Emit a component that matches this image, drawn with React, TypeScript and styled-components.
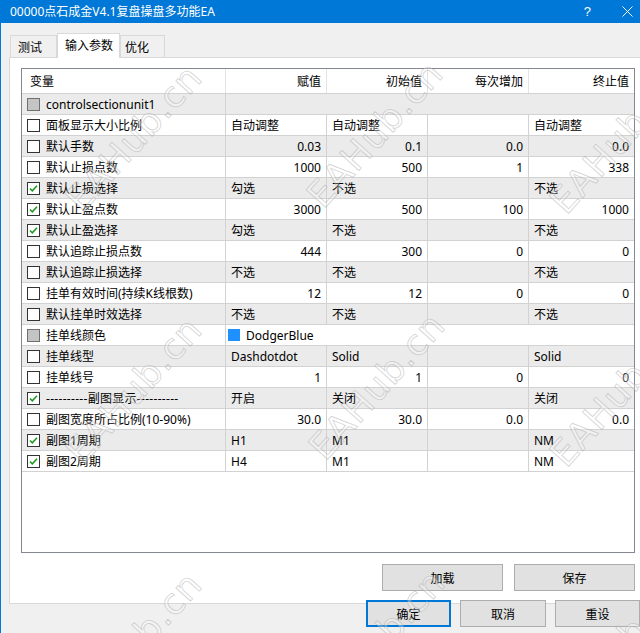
import React from "react";
import styled, { createGlobalStyle, css } from "styled-components";

const GlobalStyle = createGlobalStyle`
  html, body { margin: 0; padding: 0; overflow: hidden; background: #f0f0f0; }
  body {
    font-family: "Noto Sans", "Noto Sans CJK SC", sans-serif;
    font-size: 12px;
    color: #000;
  }
  * { box-sizing: border-box; }
`;

const Window = styled.div`
  position: relative;
  width: 640px;
  height: 633px;
  overflow: hidden;
  display: flex;
  flex-direction: column;
  background: #f0f0f0;
  border-left: 1px solid #0078d7;
`;

const TitleBar = styled.div`
  height: 23px;
  flex: none;
  display: flex;
  align-items: center;
  background: #0078d7;
  color: #fff;
  padding: 0 7px 1px 9px;
  font-size: 12px;
`;

const Title = styled.span`
  flex: 1;
  white-space: nowrap;
`;

const TitleControls = styled.div`
  display: flex;
  align-items: center;
  gap: 31px;
`;

const Help = styled.span`
  font-family: "Liberation Sans", sans-serif;
  font-size: 13px;
  line-height: 1;
`;

const Body = styled.div`
  flex: 1;
  display: flex;
  flex-direction: column;
  padding-left: 8px;
`;

const TabStrip = styled.div`
  margin-top: 10px;
  height: 24px;
  display: flex;
  align-items: flex-end;
  padding-left: 1px;
  position: relative;
  z-index: 1;
`;

const Tab = styled.div<{ $active?: boolean; $w: number; $pl: number }>`
  width: ${(p) => p.$w}px;
  padding-left: ${(p) => p.$pl}px;
  display: flex;
  align-items: center;
  border: 1px solid #d9d9d9;
  border-bottom: none;
  white-space: nowrap;
  ${(p) =>
    p.$active
      ? css`
          height: 25px;
          margin-bottom: -1px;
          background: #fff;
          padding-bottom: 2px;
        `
      : css`
          height: 22px;
          background: #f0f0f0;
        `}
`;

const Panel = styled.div`
  height: 547px;
  background: #fff;
  border: 1px solid #d9d9d9;
  border-right: none;
  padding: 10px 5px 11px 11px;
  display: flex;
  flex-direction: column;
`;

const Table = styled.div`
  width: 614px;
  height: 485px;
  flex: none;
  border: 1px solid #828790;
  background: #fff;
  display: flex;
  flex-direction: column;
`;

const Row = styled.div<{ $grey?: boolean; $header?: boolean }>`
  display: grid;
  grid-template-columns: 204px 101px 101px 101px 1fr;
  height: ${(p) => (p.$header ? 25 : 21)}px;
  flex: none;
  background: ${(p) => (p.$grey ? "#ebebeb" : "#fff")};
  border-bottom: 1px solid #d2d2d2;
`;

const Cell = styled.div<{ $num?: boolean; $span?: number; $last?: boolean; $header?: boolean }>`
  display: flex;
  align-items: center;
  gap: 6px;
  white-space: nowrap;
  overflow: hidden;
  justify-content: ${(p) => (p.$num ? "flex-end" : "flex-start")};
  padding: ${(p) => (p.$num ? "0 5px 0 0" : "0 0 0 5px")};
  border-right: ${(p) => (p.$last ? "none" : `1px solid ${p.$header ? "#e3e3e3" : "#d2d2d2"}`)};
  ${(p) => (p.$span ? `grid-column: span ${p.$span};` : "")}
`;

const NameCell = styled(Cell)`
  padding-left: 5px;
`;

const HeaderName = styled(Cell)`
  padding-left: 8px;
`;

const Dashes = styled.span`
  letter-spacing: 0.3px;
`;

const Box = styled.span<{ $disabled?: boolean }>`
  width: 13px;
  height: 13px;
  flex: none;
  border: 1px solid ${(p) => (p.$disabled ? "#707070" : "#333")};
  background: ${(p) => (p.$disabled ? "#c4c4c4" : "#fff")};
  display: flex;
  align-items: center;
  justify-content: center;
`;

const Swatch = styled.span<{ $color: string }>`
  width: 12px;
  height: 12px;
  flex: none;
  margin-left: -3px;
  background: ${(p) => p.$color};
`;

const ButtonRow = styled.div<{ $gap: number }>`
  display: flex;
  justify-content: flex-end;
  gap: ${(p) => p.$gap}px;
`;

const TopButtons = styled(ButtonRow)`
  margin-top: 11px;
`;

const BottomButtons = styled(ButtonRow)`
  margin-top: -4px;
  position: relative;
  z-index: 1;
`;

const Button = styled.div<{ $w: number; $default?: boolean }>`
  width: ${(p) => p.$w}px;
  height: 27px;
  display: flex;
  align-items: center;
  justify-content: center;
  background: #e1e1e1;
  border: ${(p) => (p.$default ? "2px solid #0078d7" : "1px solid #adadad")};
`;

const Watermark = styled.span<{ $x: number; $y: number }>`
  position: absolute;
  left: ${(p) => p.$x}px;
  top: ${(p) => p.$y}px;
  transform: translate(-50%, -50%) rotate(-48deg);
  font-family: "DejaVu Sans", sans-serif;
  font-size: 36px;
  letter-spacing: 1px;
  color: rgba(255, 255, 255, 0.3);
  -webkit-text-stroke: 0.8px rgba(165, 165, 165, 0.5);
  white-space: nowrap;
  pointer-events: none;
  z-index: 5;
`;

type Check = "on" | "off" | "disabled";
type RowData = {
  name: string;
  check: Check;
  values?: string[];
  num?: boolean;
  color?: string;
  merged?: boolean;
};

const rows: RowData[] = [
  { name: "controlsectionunit1", check: "disabled", merged: true },
  { name: "面板显示大小比例", check: "off", values: ["自动调整", "自动调整", "", "自动调整"] },
  { name: "默认手数", check: "off", values: ["0.03", "0.1", "0.0", "0.0"], num: true },
  { name: "默认止损点数", check: "off", values: ["1000", "500", "1", "338"], num: true },
  { name: "默认止损选择", check: "on", values: ["勾选", "不选", "", "不选"] },
  { name: "默认止盈点数", check: "on", values: ["3000", "500", "100", "1000"], num: true },
  { name: "默认止盈选择", check: "on", values: ["勾选", "不选", "", "不选"] },
  { name: "默认追踪止损点数", check: "off", values: ["444", "300", "0", "0"], num: true },
  { name: "默认追踪止损选择", check: "off", values: ["不选", "不选", "", "不选"] },
  { name: "挂单有效时间(持续K线根数)", check: "off", values: ["12", "12", "0", "0"], num: true },
  { name: "默认挂单时效选择", check: "off", values: ["不选", "不选", "", "不选"] },
  { name: "挂单线颜色", check: "disabled", merged: true, color: "DodgerBlue" },
  { name: "挂单线型", check: "off", values: ["Dashdotdot", "Solid", "", "Solid"] },
  { name: "挂单线号", check: "off", values: ["1", "1", "0", "0"], num: true },
  { name: "----------副图显示----------", check: "on", values: ["开启", "关闭", "", "关闭"] },
  { name: "副图宽度所占比例(10-90%)", check: "off", values: ["30.0", "30.0", "0.0", "0.0"], num: true },
  { name: "副图1周期", check: "on", values: ["H1", "M1", "", "NM"] },
  { name: "副图2周期", check: "on", values: ["H4", "M1", "", "NM"] },
];

const CheckBox = ({ state }: { state: Check }) => (
  <Box $disabled={state === "disabled"}>
    {state === "on" && (
      <svg width="11" height="11" viewBox="0 0 11 11">
        <path d="M2 5.5 L4.3 7.8 L9 2.8" fill="none" stroke="#1a9a1a" strokeWidth="1.5" />
      </svg>
    )}
  </Box>
);

const headers = ["赋值", "初始值", "每次增加", "终止值"];

const marks: [number, number][] = [
  [133, 138], [374, 134], [617, 140],
  [133, 390], [376, 386], [617, 393],
  [133, 645], [376, 643], [617, 648],
];

export default function App() {
  return (
    <>
      <GlobalStyle />
      <Window>
        <TitleBar>
          <Title>00000点石成金V4.1复盘操盘多功能EA</Title>
          <TitleControls>
            <Help>?</Help>
            <svg width="11" height="11" viewBox="0 0 11 11">
              <path d="M0.5 0.5 L10.5 10.5 M10.5 0.5 L0.5 10.5" stroke="#fff" strokeWidth="1" />
            </svg>
          </TitleControls>
        </TitleBar>
        <Body>
          <TabStrip>
            <Tab $w={47} $pl={7}>测试</Tab>
            <Tab $active $w={63} $pl={7}>输入参数</Tab>
            <Tab $w={45} $pl={4}>优化</Tab>
          </TabStrip>
          <Panel>
            <Table>
              <Row $header>
                <HeaderName $header>变量</HeaderName>
                {headers.map((h, i) => (
                  <Cell key={h} $num $header $last={i === 3}>
                    {h}
                  </Cell>
                ))}
              </Row>
              {rows.map((r, idx) => (
                <Row key={r.name} $grey={idx % 2 === 0}>
                  <NameCell>
                    <CheckBox state={r.check} />
                    {r.name.startsWith("-") ? <Dashes>{r.name}</Dashes> : r.name}
                  </NameCell>
                  {r.merged ? (
                    <Cell $span={4} $last>
                      {r.color && (
                        <>
                          <Swatch $color="#1e90ff" />
                          {r.color}
                        </>
                      )}
                    </Cell>
                  ) : (
                    r.values!.map((v, i) => (
                      <Cell key={i} $num={r.num} $last={i === 3}>
                        {v}
                      </Cell>
                    ))
                  )}
                </Row>
              ))}
            </Table>
            <TopButtons $gap={11}>
              <Button $w={121}>加载</Button>
              <Button $w={121}>保存</Button>
            </TopButtons>
          </Panel>
          <BottomButtons $gap={9}>
            <Button $w={85} $default>确定</Button>
            <Button $w={86}>取消</Button>
            <Button $w={85}>重设</Button>
          </BottomButtons>
        </Body>
        {marks.map(([x, y], i) => (
          <Watermark key={i} $x={x} $y={y}>
            EAHub.cn
          </Watermark>
        ))}
      </Window>
    </>
  );
}
